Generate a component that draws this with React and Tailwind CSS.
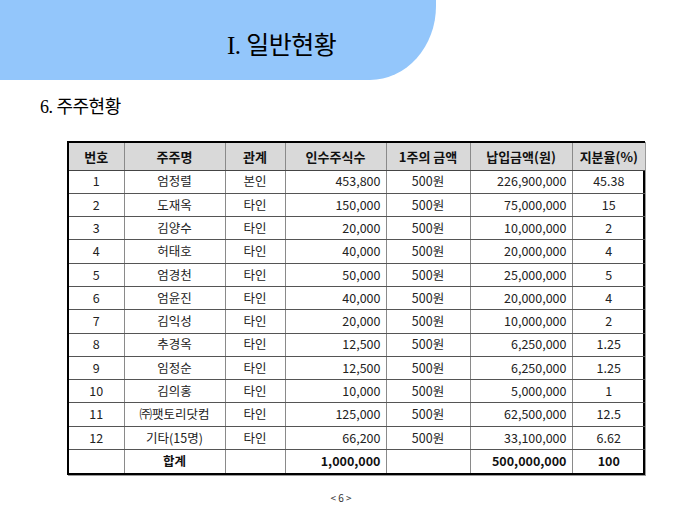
import React from 'react';

const rows = [
  ['1', '엄정렬', '본인', '453,800', '500원', '226,900,000', '45.38'],
  ['2', '도재옥', '타인', '150,000', '500원', '75,000,000', '15'],
  ['3', '김양수', '타인', '20,000', '500원', '10,000,000', '2'],
  ['4', '허태호', '타인', '40,000', '500원', '20,000,000', '4'],
  ['5', '엄경천', '타인', '50,000', '500원', '25,000,000', '5'],
  ['6', '엄윤진', '타인', '40,000', '500원', '20,000,000', '4'],
  ['7', '김익성', '타인', '20,000', '500원', '10,000,000', '2'],
  ['8', '추경옥', '타인', '12,500', '500원', '6,250,000', '1.25'],
  ['9', '임정순', '타인', '12,500', '500원', '6,250,000', '1.25'],
  ['10', '김의홍', '타인', '10,000', '500원', '5,000,000', '1'],
  ['11', '㈜팻토리닷컴', '타인', '125,000', '500원', '62,500,000', '12.5'],
  ['12', '기타(15명)', '타인', '66,200', '500원', '33,100,000', '6.62'],
];

const headers = ['번호', '주주명', '관계', '인수주식수', '1주의 금액', '납입금액(원)', '지분율(%)'];
const widths = ['w-[55px]', 'w-[101px]', 'w-[60px]', 'w-[101px]', 'w-[84px]', 'w-[102px]', 'w-[73px]'];

const cell = 'h-[23.3px] p-0 border-b border-b-[#555] border-r border-r-[#8a8a8a] last:border-r-0';

const App = () => {
  return (
    <div className="relative w-[680px] h-[510px] bg-white overflow-hidden font-['Noto_Sans_CJK_KR',sans-serif] text-[#222]">
      {/* title banner */}
      <div className="w-[436px] h-[80px] bg-[#93c6fb] rounded-br-[66px_74px] flex items-center pl-[227px] pt-[10px]">
        <h1 className="text-[25px] leading-none text-black font-['Liberation_Serif','Noto_Sans_CJK_KR',serif] tracking-[-0.5px]">
          I. 일반현황
        </h1>
      </div>

      <h2 className="pl-[40px] mt-[18px] text-[18px] leading-none text-black font-['Liberation_Serif','Noto_Sans_CJK_KR',serif] tracking-[-0.5px]">
        6. 주주현황
      </h2>

      <div className="ml-[67px] mt-[25px] w-[578px] border-2 border-black shadow-[1px_1px_0_#9a9a9a]">
        <table className="w-full border-collapse table-fixed text-[12.5px] leading-none font-normal">
          <thead>
            <tr className="bg-[#d9d9d9]">
              {headers.map((h, i) => (
                <th key={h} className={`${widths[i]} h-[27px] p-0 font-semibold text-[13px] text-[#111] border-b border-b-[#444] border-r border-r-[#8a8a8a] last:border-r-0`}>
                  {h}
                </th>
              ))}
            </tr>
          </thead>
          <tbody>
            {rows.map(r => (
              <tr key={r[0]}>
                <td className={`${cell} text-center`}>{r[0]}</td>
                <td className={`${cell} text-center`}>{r[1]}</td>
                <td className={`${cell} text-center`}>{r[2]}</td>
                <td className={`${cell} text-right pr-[5px]`}>{r[3]}</td>
                <td className={`${cell} text-center`}>{r[4]}</td>
                <td className={`${cell} text-right pr-[5px]`}>{r[5]}</td>
                <td className={`${cell} text-center`}>{r[6]}</td>
              </tr>
            ))}
            <tr className="font-bold text-[#111]">
              <td className="h-[23.3px] p-0 border-r border-r-[#8a8a8a]"></td>
              <td className="h-[23.3px] p-0 border-r border-r-[#8a8a8a] text-center">합계</td>
              <td className="h-[23.3px] p-0 border-r border-r-[#8a8a8a]"></td>
              <td className="h-[23.3px] p-0 border-r border-r-[#8a8a8a] text-right pr-[5px]">1,000,000</td>
              <td className="h-[23.3px] p-0 border-r border-r-[#8a8a8a]"></td>
              <td className="h-[23.3px] p-0 border-r border-r-[#8a8a8a] text-right pr-[5px]">500,000,000</td>
              <td className="h-[23.3px] p-0 text-center">100</td>
            </tr>
          </tbody>
        </table>
      </div>

      <div className="mt-[15px] text-center pl-[2px] text-[10px] text-[#333]">
        &lt; 6 &gt;
      </div>
    </div>
  );
};

export default App;
